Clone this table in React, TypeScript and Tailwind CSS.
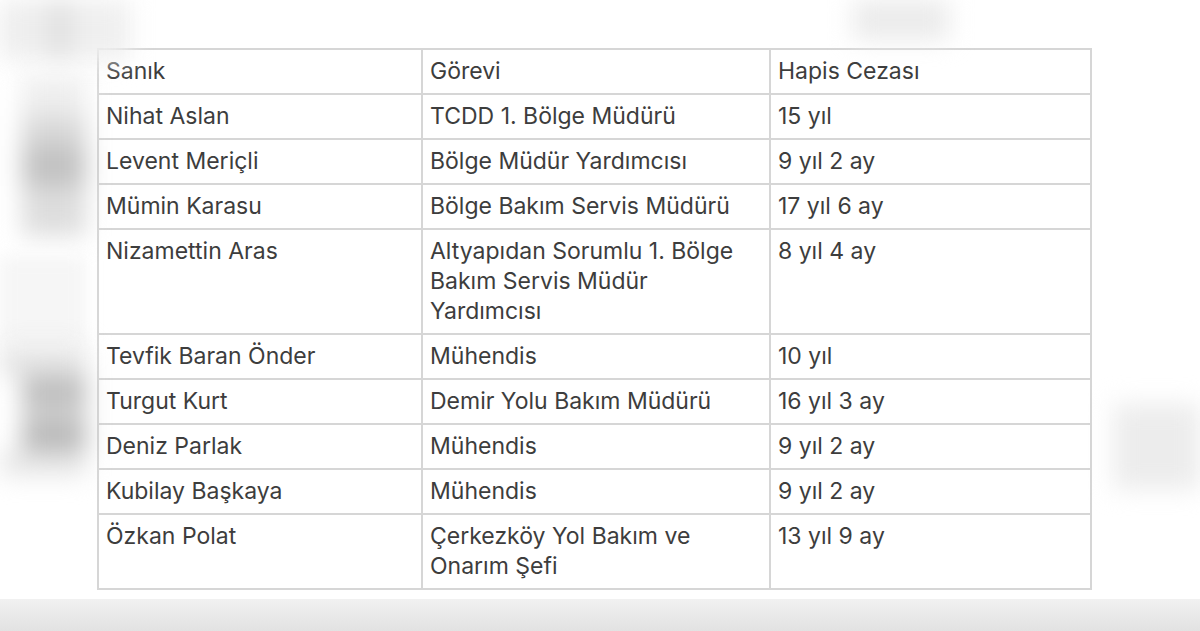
const rows: [string, string[], string][] = [
  ["Nihat Aslan", ["TCDD 1. Bölge Müdürü"], "15 yıl"],
  ["Levent Meriçli", ["Bölge Müdür Yardımcısı"], "9 yıl 2 ay"],
  ["Mümin Karasu", ["Bölge Bakım Servis Müdürü"], "17 yıl 6 ay"],
  ["Nizamettin Aras", ["Altyapıdan Sorumlu 1. Bölge", "Bakım Servis Müdür", "Yardımcısı"], "8 yıl 4 ay"],
  ["Tevfik Baran Önder", ["Mühendis"], "10 yıl"],
  ["Turgut Kurt", ["Demir Yolu Bakım Müdürü"], "16 yıl 3 ay"],
  ["Deniz Parlak", ["Mühendis"], "9 yıl 2 ay"],
  ["Kubilay Başkaya", ["Mühendis"], "9 yıl 2 ay"],
  ["Özkan Polat", ["Çerkezköy Yol Bakım ve", "Onarım Şefi"], "13 yıl 9 ay"],
];

const cell = "border-2 border-[#d6d6d6] pl-[7px] pr-2 pt-[6px] pb-[7px] align-top";

export default function App() {
  return (
    <div className="flex h-[631px] w-[1200px] flex-col overflow-hidden bg-white font-['Inter',sans-serif]">
      {/* top strip, blurred photo */}
      <div className="flex h-[32px] shrink-0">
        <div className="flex h-[60px] w-[130px] blur-md">
          <div className="w-[50px] bg-[#eeeeee]" />
          <div className="w-[20px] bg-[#dedede]" />
          <div className="w-[60px] bg-[#efefef]" />
        </div>
        <div className="ml-[723px] h-[40px] w-[96px] bg-[#ebebeb] blur-md" />
      </div>

      <div className="flex h-[567px] shrink-0">
        {/* left strip */}
        <div className="flex w-[86px] shrink-0 flex-col">
          <div className="h-[44px]" />
          <div className="ml-[22px] flex h-[160px] flex-col blur-md">
            <div className="h-[40px] bg-[#eeeeee]" />
            <div className="h-[30px] bg-[#d8d8d8]" />
            <div className="h-[40px] bg-[#c2c2c2]" />
            <div className="h-[50px] bg-[#dddddd]" />
          </div>
          <div className="h-[20px]" />
          <div className="h-[90px] bg-[#f6f6f6] blur-sm" />
          <div className="flex h-[130px] flex-col blur-md">
            <div className="h-[30px] bg-[#e4e4e4]" />
            <div className="ml-[22px] h-[30px] bg-[#bebebe]" />
            <div className="ml-[22px] h-[15px] bg-[#d4d4d4]" />
            <div className="ml-[22px] h-[30px] bg-[#b9b9b9]" />
            <div className="h-[25px] bg-[#e6e6e6]" />
          </div>
        </div>

        {/* card */}
        <div className="w-[1028px] shrink-0 bg-white pl-[11px] pt-[16px]">
          <table className="w-[995px] table-fixed border-collapse text-[23px] leading-[30px] text-[#3d3d3d]">
            <colgroup>
              <col className="w-[324px]" />
              <col className="w-[348px]" />
              <col />
            </colgroup>
            <tbody>
              <tr>
                <td className={cell}>Sanık</td>
                <td className={cell}>Görevi</td>
                <td className={cell}>Hapis Cezası</td>
              </tr>
              {rows.map(([name, job, term]) => (
                <tr key={name}>
                  <td className={cell}>{name}</td>
                  <td className={cell}>
                    {job.map((l) => (
                      <div key={l}>{l}</div>
                    ))}
                  </td>
                  <td className={cell}>{term}</td>
                </tr>
              ))}
            </tbody>
          </table>
        </div>

        {/* right strip */}
        <div className="flex w-[86px] shrink-0 flex-col">
          <div className="h-[372px]" />
          <div className="h-[85px] bg-[#ececec] blur-md" />
        </div>
      </div>

      <div className="h-[32px] shrink-0 bg-gradient-to-b from-[#f1f1f1] to-[#e2e2e2]" />
    </div>
  );
}
